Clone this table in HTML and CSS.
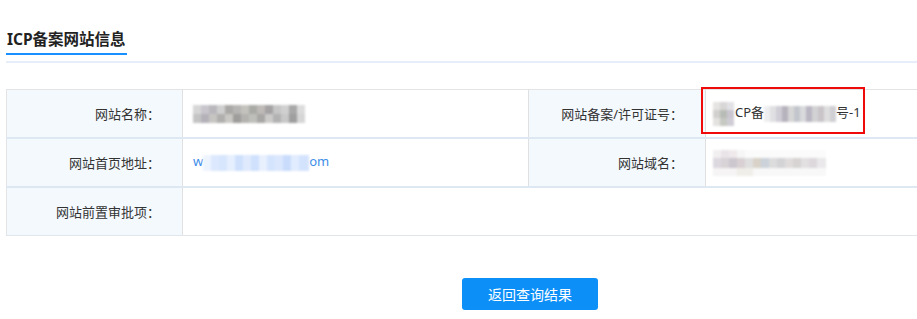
FILE: index.html
```html
<!DOCTYPE html>
<html lang="zh-CN">
<head>
  <meta charset="UTF-8" />
  <title>ICP备案网站信息</title>
  <link rel="stylesheet" href="styles.css">
</head>
<body>
  <div class="page">
    <div class="section-head">
      <h2>ICP备案网站信息</h2>
    </div>

    <table class="info-table">
      <colgroup>
        <col class="col-label">
        <col class="col-value">
        <col class="col-label2">
        <col class="col-value2">
      </colgroup>
      <tr>
        <td class="label">网站名称：</td>
        <td class="value"><span class="mosaic mosaic-name"></span></td>
        <td class="label">网站备案/许可证号：</td>
        <td class="value value-right mark-cell"><span class="mosaic mosaic-lead"></span>CP备<span class="mosaic mosaic-num"></span>号-1<div class="mark"></div></td>
      </tr>
      <tr>
        <td class="label">网站首页地址：</td>
        <td class="value"><a class="link" href="#">w<span class="mosaic mosaic-url"></span>om</a></td>
        <td class="label">网站域名：</td>
        <td class="value value-right"><span class="mosaic mosaic-domain"></span></td>
      </tr>
      <tr>
        <td class="label">网站前置审批项：</td>
        <td class="value" colspan="3"></td>
      </tr>
    </table>

    <div class="actions">
      <button class="btn-back">返回查询结果</button>
    </div>
  </div>
</body>
</html>
```

FILE: styles.css
```css
html, body {
  margin: 0;
  overflow: hidden;
  background: #fff;
}
body {
  font-family: "Noto Sans", "Noto Sans CJK SC", sans-serif;
  color: #333;
  font-size: 13px;
}
.page {
  width: 1048px;
  margin-left: 6px;
  padding-top: 27px;
}
.section-head {
  border-bottom: 2px solid #e6eff9;
  padding-bottom: 6px;
}
.section-head h2 {
  display: inline-block;
  margin: 0;
  font-size: 15.5px;
  line-height: 24px;
  font-weight: bold;
  color: #222;
  padding: 0 1px 2px 1px;
  border-bottom: 2px solid #1890ff;
}

.info-table {
  width: 100%;
  margin-top: 26px;
  border-collapse: collapse;
  table-layout: fixed;
  border: 1px solid #e4e4e4;
}
.col-label { width: 176px; }
.col-value { width: 346px; }
.col-label2 { width: 177px; }
.info-table td {
  height: 47px;
  padding: 0;
  border-bottom: 2px solid #dde8f3;
  border-right: 1px solid #e0e0e0;
  vertical-align: middle;
}
.info-table tr:last-child td {
  border-bottom: 1px solid #e0e6ec;
}
.label {
  background: #f4f9fe;
  text-align: right;
  padding-right: 22px !important;
}
.value {
  padding-left: 10px !important;
}
.value-right {
  padding-left: 7px !important;
}
.mark-cell {
  position: relative;
}
.mark {
  position: absolute;
  left: -5px;
  top: -3px;
  width: 160px;
  height: 43px;
  border: 2px solid #f00a0a;
}

.link {
  color: #3d8ee8;
  text-decoration: none;
}

/* pixelated blocks over hidden values */
.mosaic {
  display: inline-block;
  vertical-align: middle;
  filter: blur(1px);
}
.mosaic-name {
  width: 112px;
  height: 18px;
  margin-top: -2px;
  background:
    linear-gradient(90deg, #d6d6d6 0 8px, #c8c6cc 8px 16px, #b9b7bc 16px 24px, #cfcfcf 24px 32px,
      #aaa8a6 32px 40px, #b7b5b3 40px 48px, #c3c2bd 48px 56px, #a9aaa6 56px 64px,
      #bdbab8 64px 72px, #a4a2a2 72px 80px, #c6c6c6 80px 88px, #d0d0d0 88px 96px,
      #a8a8a8 96px 104px, #dcdcdc 104px 112px) top / 100% 9px no-repeat,
    linear-gradient(90deg, #c4c4c4 0 8px, #b4b2b8 8px 16px, #c7c5c2 16px 24px, #b0afad 24px 32px,
      #cac8c4 32px 40px, #9f9d9b 40px 48px, #b4b3af 48px 56px, #bebfbb 56px 64px,
      #a9a7a5 64px 72px, #cdcbca 72px 80px, #b2b2b2 80px 88px, #c8c8c8 88px 96px,
      #9e9e9e 96px 104px, #d6d6d6 104px 112px) bottom / 100% 9px no-repeat;
}
.mosaic-lead {
  width: 21px;
  height: 24px;
  margin-right: 1px;
  background:
    linear-gradient(90deg, #e6e4e2 0 7px, #d8d6d6 7px 14px, #e2e2e6 14px 21px) top / 100% 8px no-repeat,
    linear-gradient(90deg, #d2d0ce 0 7px, #b8bcb6 7px 14px, #c9c6cf 14px 21px) center / 100% 8px no-repeat,
    linear-gradient(90deg, #e4e2e0 0 7px, #c6c8c2 7px 14px, #cfccd5 14px 21px) bottom / 100% 8px no-repeat;
}
.mosaic-num {
  width: 72px;
  height: 16px;
  background:
    linear-gradient(90deg, #eeeef0 0 6px, #e0e0e2 6px 12px, #d0cdd6 12px 18px, #b7b3bd 18px 24px,
      #d6d6d6 24px 30px, #c2c6cc 30px 36px, #d9dadc 36px 42px, #bab6c2 42px 48px,
      #d2d2d4 48px 54px, #c9c4c8 54px 60px, #dedede 60px 66px, #cfcfd4 66px 72px);
}
.mosaic-url {
  width: 106px;
  height: 22px;
  background:
    linear-gradient(90deg, #eef4fe 0 8px, #dce8fd 8px 16px, #d7e6fd 16px 24px, #e6effe 24px 32px,
      #cfe0fc 32px 40px, #dfeafd 40px 48px, #d0e1fd 48px 56px, #e8f0fe 56px 64px,
      #d5e4fd 64px 72px, #dbe7fd 72px 80px, #cadcfc 80px 88px, #e1ecfe 88px 96px,
      #d4e3fd 96px 106px) center / 100% 16px no-repeat;
}
.mosaic-domain {
  width: 113px;
  height: 26px;
  background:
    linear-gradient(90deg, #f2eff1 0 8px, #e8e4e8 8px 16px, #efe9ec 16px 24px, #f6f6f6 24px 32px,
      #fbfbfb 32px 113px) top / 100% 8px no-repeat,
    linear-gradient(90deg, #dcd8df 0 8px, #d8d3d6 8px 16px, #ccc6cf 16px 24px, #d8d0d2 24px 32px,
      #e0dfe0 32px 40px, #d8d2c8 40px 48px, #cbd2da 48px 56px, #dcdcdc 56px 64px,
      #d3d3d6 64px 72px, #e0dcdc 72px 80px, #d6d3d2 80px 88px, #e3e0e2 88px 96px,
      #dcd8dc 96px 104px, #eae8ea 104px 113px) center / 100% 10px no-repeat,
    linear-gradient(90deg, #f6f4f4 0 24px, #f0eee8 24px 40px, #f8f8f8 40px 113px) bottom / 100% 8px no-repeat;
}

.actions {
  margin-top: 42px;
  text-align: center;
}
.btn-back {
  width: 136px;
  height: 32px;
  border: none;
  border-radius: 3px;
  background: #0d8ff8;
  color: #fff;
  font-family: "Noto Sans CJK SC", sans-serif;
  font-size: 14px;
  cursor: pointer;
}
```
